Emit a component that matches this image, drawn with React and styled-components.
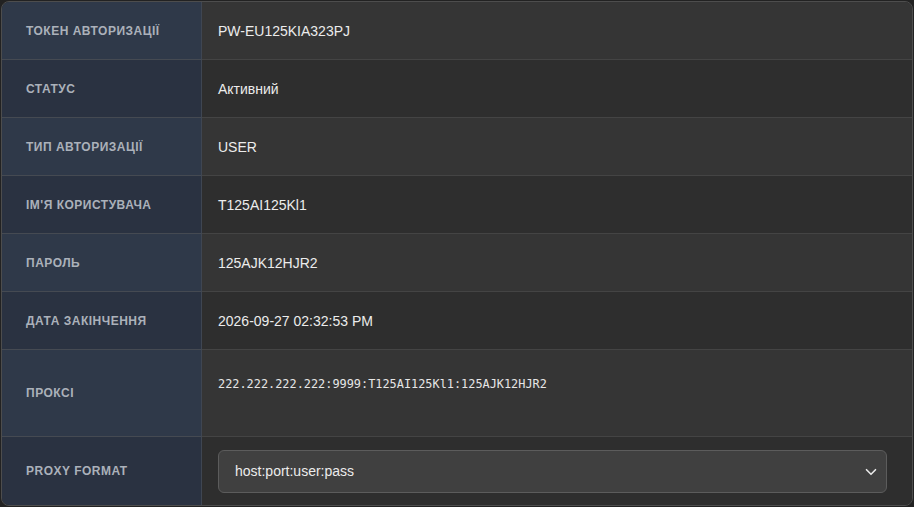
import React from "react";
import styled, { createGlobalStyle } from "styled-components";

const GlobalStyle = createGlobalStyle`
  html, body {
    margin: 0;
    padding: 0;
    background: #222222;
    font-family: "Liberation Sans", Arial, sans-serif;
  }
`;

const Wrapper = styled.div`
  margin: 1px;
  height: 505px;
  box-sizing: border-box;
  border: 1px solid #4d4d4d;
  border-radius: 8px;
  overflow: hidden;
  background: #2e2e2e;
`;

const Table = styled.div`
  display: grid;
  grid-template-columns: 200px 1fr;
`;

const Label = styled.div`
  display: flex;
  align-items: center;
  height: ${(p) => p.h}px;
  padding-left: 24px;
  background: ${(p) => (p.odd ? "#2f3949" : "#2a3241")};
  border-right: 1px solid #3f4652;
  border-bottom: ${(p) => (p.last ? "none" : "1px solid #454a52")};
  color: #abb1ba;
  font-size: 12px;
  font-weight: 700;
  letter-spacing: 0.5px;
  text-transform: uppercase;
`;

const Value = styled.div`
  display: flex;
  align-items: ${(p) => (p.top ? "flex-start" : "center")};
  height: ${(p) => p.h}px;
  box-sizing: border-box;
  padding: ${(p) => (p.top ? "27px 16px 0" : "0 25px 0 16px")};
  background: ${(p) => (p.odd ? "#353535" : "#2e2e2e")};
  border-bottom: ${(p) => (p.last ? "none" : "1px solid #444444")};
  color: #ececec;
  font-size: 14px;
`;

const Mono = styled.code`
  font-family: "DejaVu Sans Mono", "Liberation Mono", monospace;
  font-size: 11.88px;
  color: #e6e6e6;
`;

const SelectBox = styled.div`
  position: relative;
  flex: 1;
  height: 43px;
  display: flex;
  align-items: center;
  box-sizing: border-box;
  padding: 0 16px;
  background: #404040;
  border: 1px solid #5c5c5c;
  border-radius: 6px;
  color: #ececec;
  font-size: 14px;
`;

const Chevron = styled.svg`
  position: absolute;
  right: 8px;
  top: 15px;
`;

const rows = [
  { label: "Токен авторизації", value: "PW-EU125KIA323PJ" },
  { label: "Статус", value: "Активний" },
  { label: "Тип авторизації", value: "USER" },
  { label: "Ім'я користувача", value: "T125AI125Kl1" },
  { label: "Пароль", value: "125AJK12HJR2" },
  { label: "Дата закінчення", value: "2026-09-27 02:32:53 PM" },
];

export default function App() {
  return (
    <>
      <GlobalStyle />
      <Wrapper>
        <Table>
          {rows.map((r, i) => (
            <React.Fragment key={r.label}>
              <Label h={57} odd={i % 2 === 0}>
                {r.label}
              </Label>
              <Value h={58} odd={i % 2 === 0}>
                {r.value}
              </Value>
            </React.Fragment>
          ))}
          <Label h={86} odd>
            Проксі
          </Label>
          <Value h={87} odd top>
            <Mono>222.222.222.222:9999:T125AI125Kl1:125AJK12HJR2</Mono>
          </Value>
          <Label h={68} last>
            Proxy format
          </Label>
          <Value h={68} last>
            <SelectBox>
              host:port:user:pass
              <Chevron width="14" height="12" viewBox="0 0 16 16">
                <path
                  d="M2 5l6 6 6-6"
                  fill="none"
                  stroke="#e6e6e6"
                  strokeWidth="2.2"
                  strokeLinecap="round"
                  strokeLinejoin="round"
                />
              </Chevron>
            </SelectBox>
          </Value>
        </Table>
      </Wrapper>
    </>
  );
}
